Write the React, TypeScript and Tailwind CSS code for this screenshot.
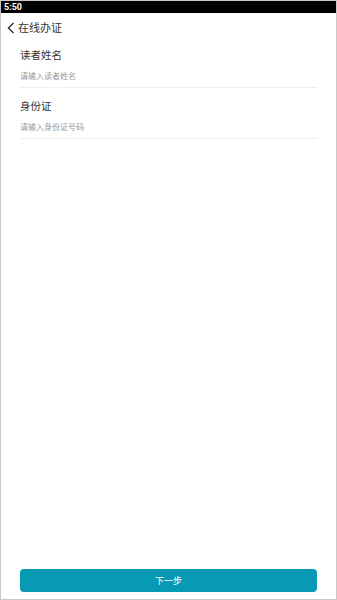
import React from "react";

export default function App() {
  return (
    <div
      className="w-[337px] h-[600px] border border-[#c9c9c9] bg-white flex flex-col box-border overflow-hidden"
      style={{ fontFamily: '"Noto Sans CJK SC", "Noto Sans", sans-serif' }}
    >
      <div className="h-[12px] bg-black flex items-center pl-[3px] shrink-0">
        <span className="text-white text-[9px] font-bold leading-none" style={{ fontFamily: '"Roboto", "Noto Sans", sans-serif' }}>5:50</span>
      </div>
      <div className="h-[29px] flex items-center pl-[6px] shrink-0">
        <svg width="8" height="12" viewBox="0 0 8 12" className="mr-[3px]">
          <path d="M6.5 1 L1.5 6 L6.5 11" fill="none" stroke="#333" strokeWidth="1.5" />
        </svg>
        <span className="text-[11px] text-[#333] leading-none">在线办证</span>
      </div>
      <div className="px-[19px] flex flex-col">
        <div className="pt-[2px] h-[21px] flex items-center text-[10.5px] text-[#333] box-content">读者姓名</div>
        <div className="h-[22px] flex items-center text-[8px] text-[#999] border-b border-[#eeeeee] box-content">请输入读者姓名</div>
        <div className="pt-[7px] h-[21px] flex items-center text-[10.5px] text-[#333] box-content">身份证</div>
        <div className="h-[22px] flex items-center text-[8px] text-[#999] border-b border-[#eeeeee] box-content">请输入身份证号码</div>
      </div>
      <div className="flex-1" />
      <div className="px-[19px] pb-[7px]">
        <div className="h-[23px] rounded-[4px] bg-[#0899b4] flex items-center justify-center text-white text-[9px]">下一步</div>
      </div>
    </div>
  );
}
